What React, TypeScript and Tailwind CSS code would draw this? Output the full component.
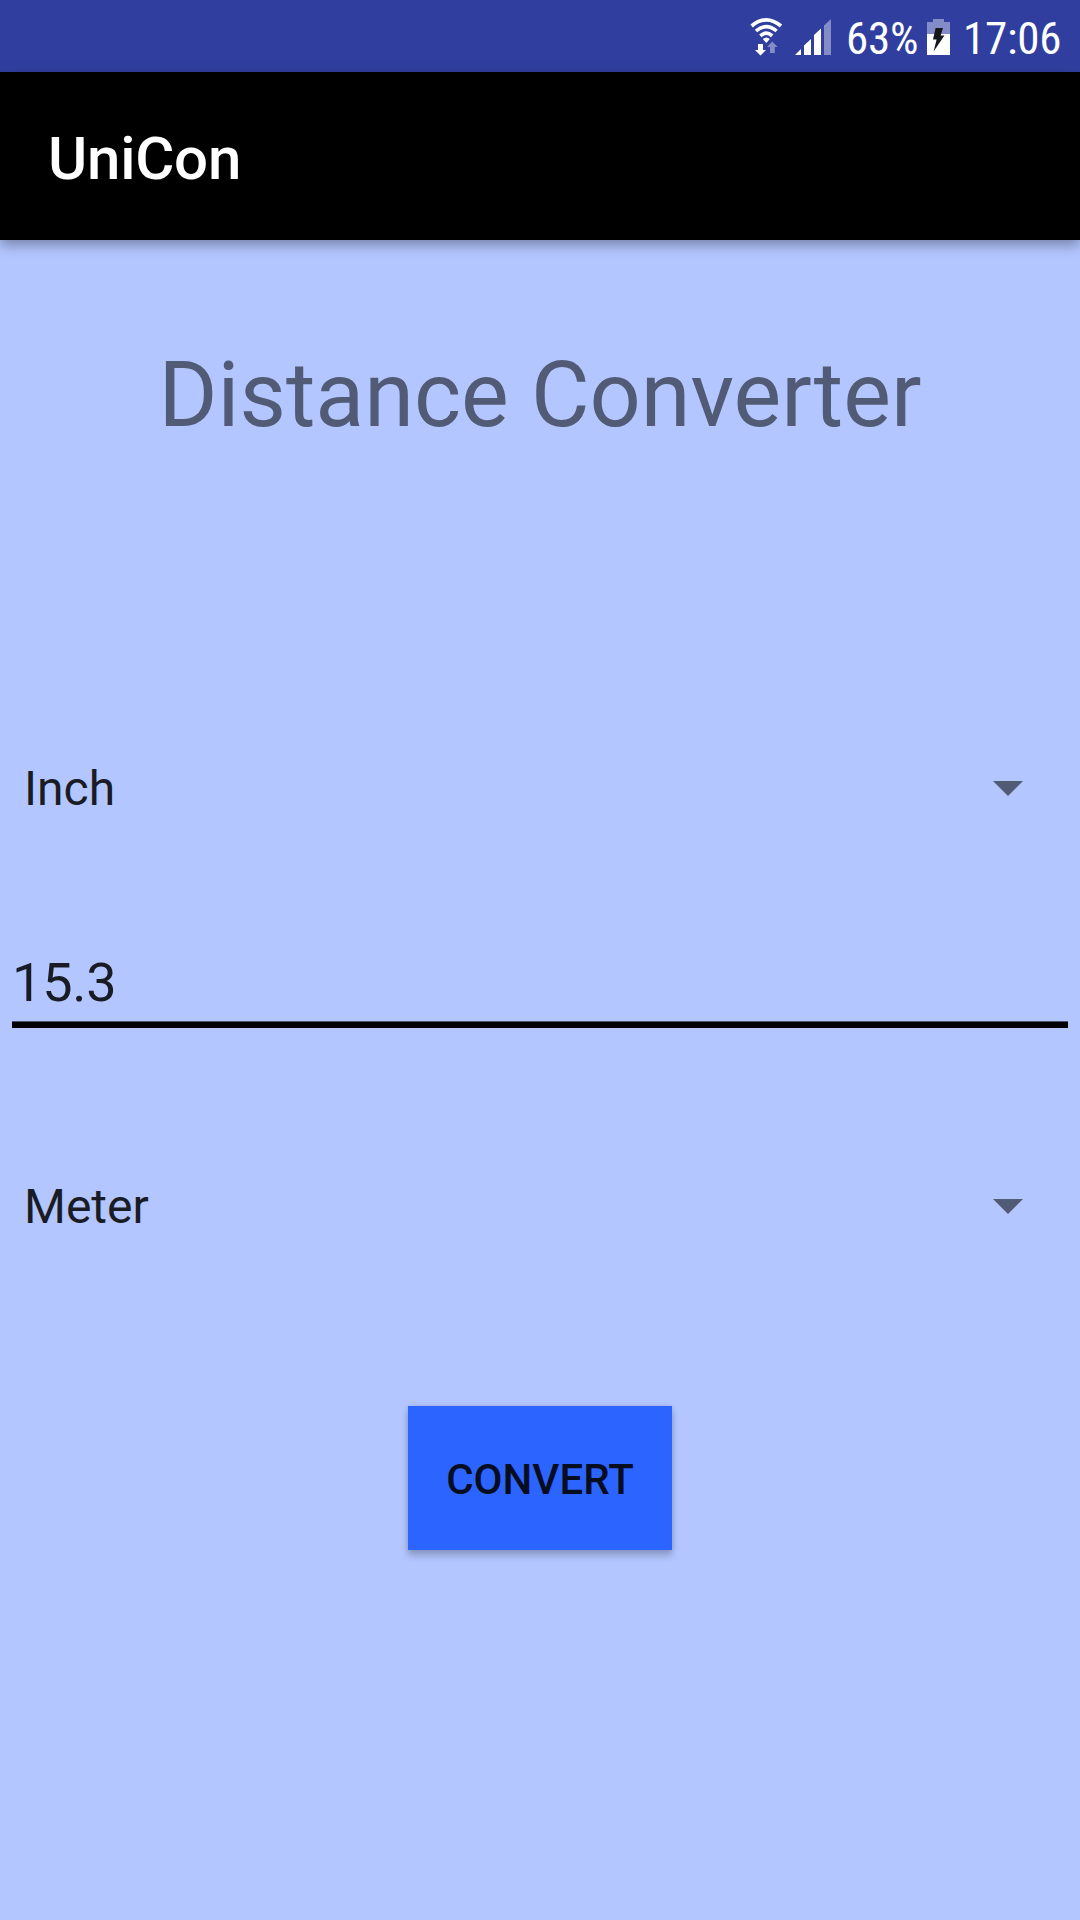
import React, { useState } from "react";

function WifiIcon() {
  return (
    <svg className="block h-[40px] w-[34px] shrink-0" viewBox="0 0 34 40" fill="none">
      <g stroke="#fff" strokeWidth="3.6">
        <path d="M1.6 9Q16.3 -3.4 31 9" />
        <path d="M6 14Q16.3 5.2 26.6 14" />
        <path d="M10.4 18.8Q16.3 13.6 22.2 18.8" />
      </g>
      <path d="M12.8 22Q16.3 19 19.8 22L16.3 26Z" fill="#fff" />
      <path d="M8 27H13V33H16L10.5 38.6L5 33H8Z" fill="#fff" />
      <path d="M20 36V30H17L22.3 24.6L27.6 30H24.8V36Z" fill="#838cc7" />
    </svg>
  );
}

function SignalIcon() {
  return (
    <svg className="block h-[36px] w-[37px] shrink-0" viewBox="0 0 37 36">
      <path d="M0 36L6 30V36Z" fill="#fff" />
      <path d="M9 36V26.5L16 20V36Z" fill="#fff" />
      <path d="M19 36V16L26 9.5V36Z" fill="#fff" />
      <path d="M29 36V6.5L36 0V36Z" fill="#838cc7" />
    </svg>
  );
}

function BatteryIcon() {
  return (
    <svg className="block h-[36px] w-[23px] shrink-0" viewBox="0 0 23 36">
      <path d="M0 3H6V0H17V3H23V15H0Z" fill="#838cc7" />
      <path d="M0 15H23V36H0Z" fill="#fff" />
      <path d="M8.6 9H16L13.6 16.4H17.4L6.6 32.4L9.6 20.4H6Z" fill="#15171c" />
    </svg>
  );
}

function StatusBar() {
  return (
    <div className="flex h-[72px] items-start justify-end bg-[#303f9f] pr-[17px] text-[45px] leading-[78px] tracking-[-0.2px] text-white [font-family:'Roboto_Condensed',Roboto,sans-serif] [font-stretch:75%]">
      <div className="mt-[17px] mr-[11px]"><WifiIcon /></div>
      <div className="mt-[19px] mr-[14px]"><SignalIcon /></div>
      <span className="mr-[9px] block w-[72px] whitespace-nowrap">63%</span>
      <div className="mt-[19px] mr-[13px]"><BatteryIcon /></div>
      <span className="block w-[100px] whitespace-nowrap">17:06</span>
    </div>
  );
}

function Spinner({ value }: { value: string }) {
  return (
    <button className="flex h-[72px] w-full items-center justify-between pr-[57px] pl-[24px] text-left text-[48px] leading-[72px] text-[#191c24]">
      <span>{value}</span>
      <svg className="-mt-px block h-[15px] w-[30px]" viewBox="0 0 30 15">
        <path d="M0 0H30L15 15Z" fill="#525b75" />
      </svg>
    </button>
  );
}

export default function App() {
  const [amount, setAmount] = useState("15.3");
  return (
    <div className="flex h-[1920px] w-[1080px] flex-col overflow-hidden bg-[#b3c6ff] [font-family:Roboto,sans-serif]">
      <StatusBar />
      <header className="relative flex h-[168px] shrink-0 items-center bg-black px-[48px] pt-[6px] shadow-[0_5px_12px_rgba(0,0,0,0.34)]">
        <h1 className="text-[60px] leading-[72px] font-medium tracking-[-0.25px] text-white">UniCon</h1>
      </header>
      <main className="flex flex-col">
        <h2 className="mt-[96px] text-center text-[90px] leading-[120px] tracking-[-0.03px] text-[#525b75]">Distance Converter</h2>
        <div className="mt-[297px]"><Spinner value="Inch" /></div>
        <div className="mx-[12px] mt-[122px] h-[81px] border-b-[6px] border-black">
          <input
            className="block h-[75px] w-full border-b border-[#49516a] bg-transparent p-0 pb-[4px] text-[54px] leading-[70px] tracking-[-0.2px] text-[#191c24] outline-none"
            value={amount}
            onChange={(e) => setAmount(e.target.value)}
          />
        </div>
        <div className="mt-[143px]"><Spinner value="Meter" /></div>
        <button className="mx-auto mt-[163px] h-[144px] w-[264px] bg-[#2c64ff] pt-[3px] text-[42px] leading-[56px] font-medium text-[#060d21] shadow-[0_6px_7px_rgba(0,0,0,0.2),0_0_5px_rgba(0,0,0,0.14)]">
          CONVERT
        </button>
      </main>
    </div>
  );
}
